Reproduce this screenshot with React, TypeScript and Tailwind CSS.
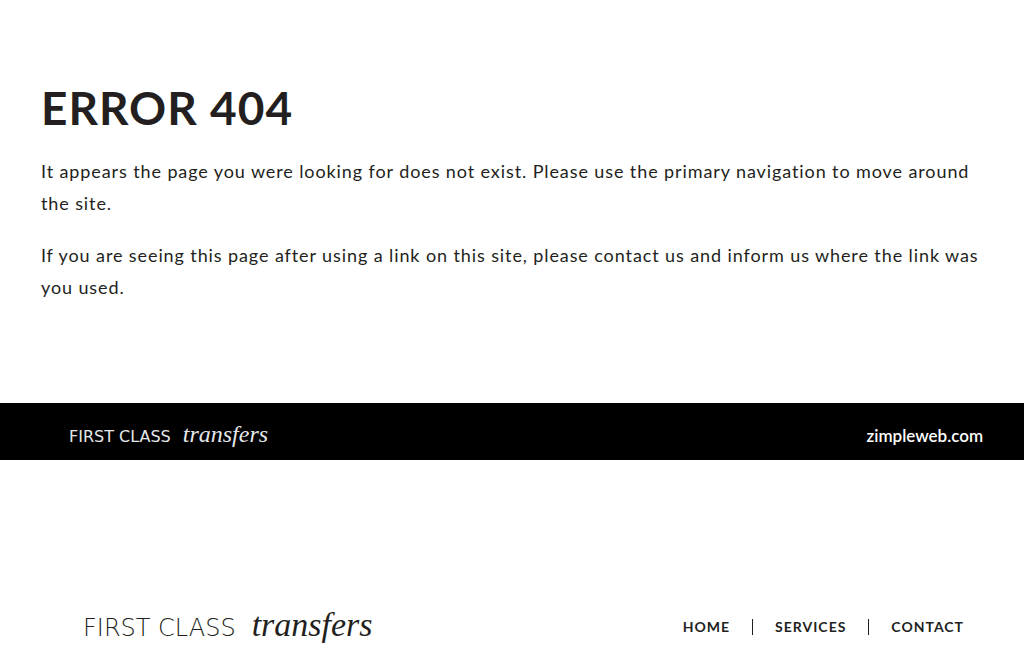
type LogoProps = { size: 'small' | 'large' };

function Logo({ size }: LogoProps) {
  const large = size === 'large';
  return (
    <a
      href="/"
      className={
        large
          ? 'flex items-baseline gap-4 whitespace-nowrap text-[#231f20]'
          : 'flex items-baseline gap-3 whitespace-nowrap text-gray-200'
      }
    >
      <span
        className={
          large
            ? "font-['DejaVu_Sans',sans-serif] text-[24px] leading-10 font-extralight"
            : "font-['DejaVu_Sans',sans-serif] text-[16px] leading-8 font-normal"
        }
      >
        FIRST CLASS
      </span>
      <span
        className={
          large
            ? "font-['Liberation_Serif',serif] text-[34px] leading-10 italic"
            : "font-['Liberation_Serif',serif] text-[24px] leading-8 italic"
        }
      >
        transfers
      </span>
    </a>
  );
}

const links = [
  { label: 'HOME', href: '/' },
  { label: 'SERVICES', href: '/services' },
  { label: 'CONTACT', href: '/contact' },
];

export default function App() {
  return (
    <div className="bg-white font-['Lato',sans-serif] text-[#231f20]">
      <main className="px-[4%] pt-20 pb-[100px]">
        <h1 className="text-[46px] leading-14 font-bold tracking-[1px]">ERROR 404</h1>
        <div className="mt-[19px] space-y-5 text-lg leading-8 tracking-wider">
          <p>
            It appears the page you were looking for does not exist. Please use the primary
            navigation to move around the site.
          </p>
          <p>
            If you are seeing this page after using a link on this site, please contact us and
            inform us where the link was you used.
          </p>
        </div>
      </main>

      <div className="flex h-[57px] items-center justify-between bg-black pt-2 pr-[4%] pl-[69px]">
        <Logo size="small" />
        <a
          href="https://zimpleweb.com"
          className="text-[17px] leading-8 font-semibold text-white"
        >
          zimpleweb.com
        </a>
      </div>

      <footer className="flex items-center justify-between pt-[145px] pr-[60px] pb-4 pl-[83px]">
        <Logo size="large" />
        <nav aria-label="Footer" className="text-sm leading-8 font-bold tracking-[1px]">
          <ul className="flex">
            {links.map((link, index) => (
              <li key={link.label} className="flex items-center">
                {index > 0 && (
                  <span aria-hidden="true" className="mx-[22px] h-4 w-px bg-[#231f20]" />
                )}
                <a href={link.href}>{link.label}</a>
              </li>
            ))}
          </ul>
        </nav>
      </footer>
    </div>
  );
}
